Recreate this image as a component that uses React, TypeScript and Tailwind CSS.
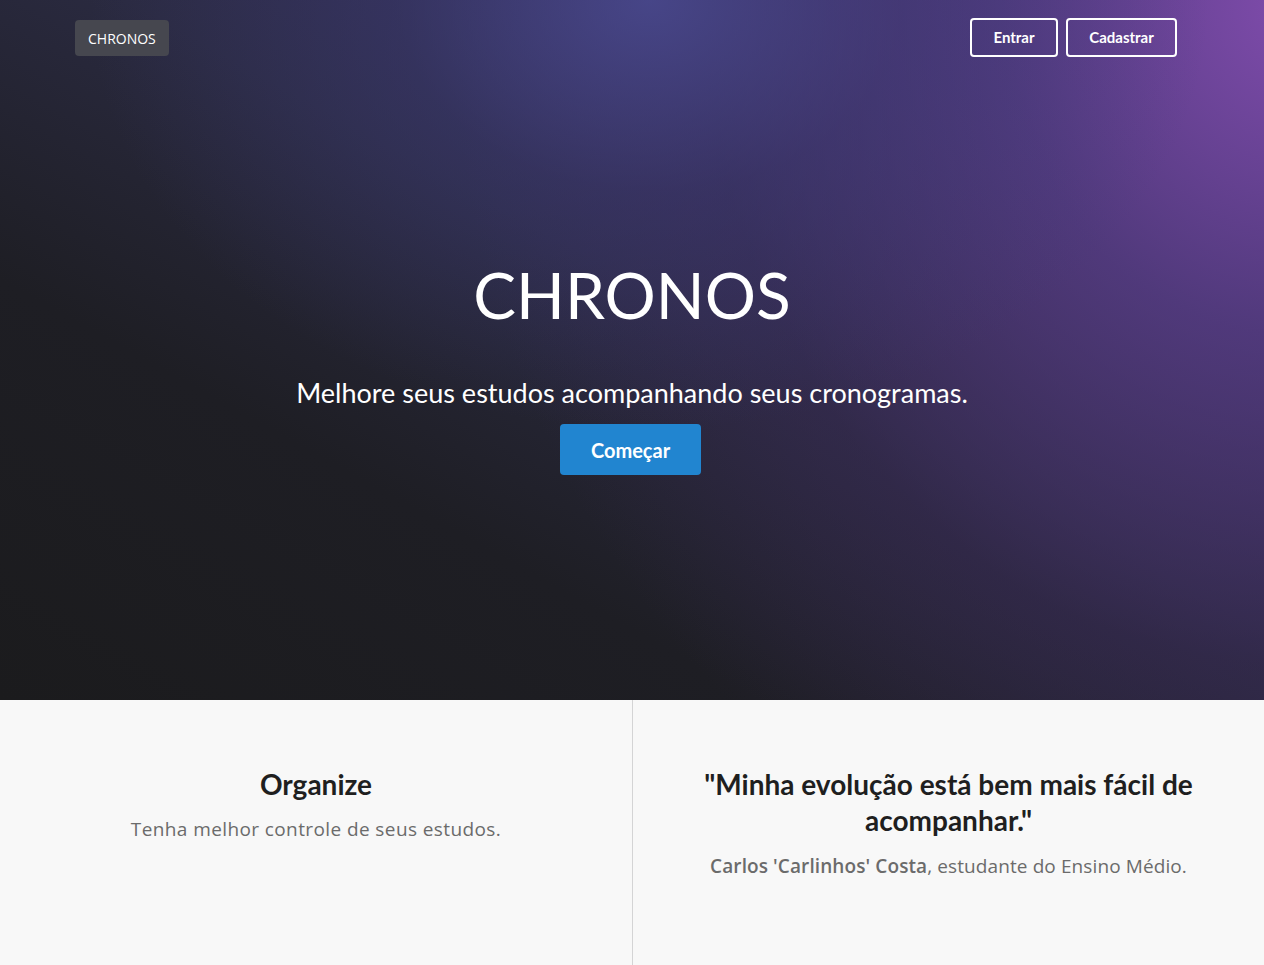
import React from "react";

export default function App() {
  const lato = { fontFamily: "Lato, 'Noto Sans', sans-serif" };
  const body = { fontFamily: "'Open Sans', 'Noto Sans', sans-serif" };
  return (
    <div className="w-full min-h-screen bg-[#f8f8f8]" style={lato}>
      <section
        className="relative h-[700px] w-full overflow-hidden bg-[#1c1c20]"
        style={{
          backgroundImage:
            "radial-gradient(ellipse 560px 430px at 650px 0px, rgba(74,74,145,0.85) 0%, rgba(62,60,122,0.45) 45%, rgba(40,40,70,0) 100%), radial-gradient(ellipse 850px 950px at 1300px 0px, rgba(128,76,172,1) 0%, rgba(92,62,140,0.72) 35%, rgba(62,42,92,0.4) 70%, rgba(40,30,50,0) 100%), linear-gradient(to top right, #1b1b1d 0%, #1e1e24 30%, #2a2a40 55%, #3a3062 100%)",
        }}
      >
        <div className="flex items-start justify-between pl-[75px] pr-[87px] pt-[18px]">
          <div className="mt-[2px] flex h-[36px] items-center rounded-[4px] bg-[#46474f] px-[13px] text-[14px] font-medium text-white" style={body}>
            CHRONOS
          </div>
          <div className="flex gap-[8px]">
            <button className="flex h-[39px] w-[88px] items-center justify-center rounded-[4px] border-2 border-white text-[15px] font-bold text-white">
              Entrar
            </button>
            <button className="flex h-[39px] w-[111px] items-center justify-center rounded-[4px] border-2 border-white text-[15px] font-bold text-white">
              Cadastrar
            </button>
          </div>
        </div>
        <div className="flex flex-col items-center pt-[206px]">
          <h1 className="text-[64px] font-normal leading-none text-white">CHRONOS</h1>
          <p className="mt-[52px] text-[27px] leading-none text-white">
            Melhore seus estudos acompanhando seus cronogramas.
          </p>
          <button className="mr-[3px] mt-[18px] flex h-[51px] w-[141px] items-center justify-center rounded-[4px] bg-[#2185d0] text-[20px] font-bold text-white">
            Começar
          </button>
        </div>
      </section>
      <section className="grid h-[265px] grid-cols-2 bg-[#f8f8f8]">
        <div className="flex flex-col items-center pt-[67px]">
          <h3 className="text-[28px] font-bold leading-[34px] text-[#1f1f1f]">Organize</h3>
          <p className="mt-[14px] text-[19px] tracking-[0.4px] text-[#6b6b6b]" style={body}>
            Tenha melhor controle de seus estudos.
          </p>
        </div>
        <div className="flex flex-col items-center border-l border-[#d4d4d5] pt-[66px]">
          <h3 className="w-[500px] text-center text-[28px] font-bold leading-[36px] text-[#1f1f1f]">
            "Minha evolução está bem mais fácil de acompanhar."
          </h3>
          <p className="mt-[14px] text-[19px] tracking-[0.1px] text-[#6b6b6b]" style={body}>
            <span className="font-semibold">Carlos 'Carlinhos' Costa</span>, estudante do Ensino Médio.
          </p>
        </div>
      </section>
    </div>
  );
}
